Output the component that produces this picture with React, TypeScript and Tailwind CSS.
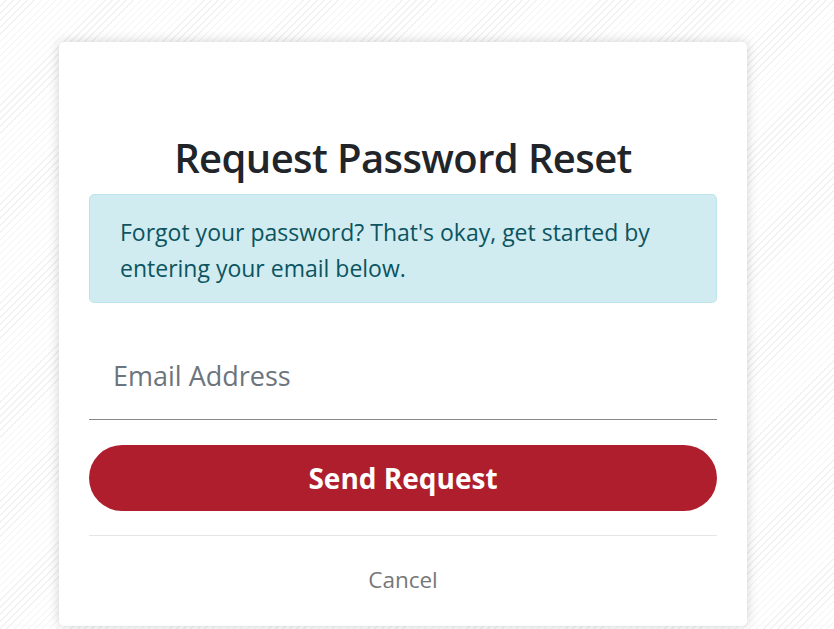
const font = { fontFamily: '"Open Sans", "Noto Sans", sans-serif' };

export default function App() {
  return (
    <div
      className="min-h-[629px] w-full bg-[repeating-linear-gradient(135deg,#ffffff_0px,#ffffff_4px,#f2f2f2_4px,#f2f2f2_5px)] pt-[42px] pl-[59px]"
      style={font}
    >
      <div className="w-[688px] h-[584px] rounded-[5px] bg-white shadow-[0_0_12px_rgba(0,0,0,0.18)] px-[30px] pt-[92px]">
        <h1 className="text-center text-[40px] leading-[48px] font-semibold text-[#212529] tracking-[-0.6px]">
          Request Password Reset
        </h1>
        <div className="mt-[12px] h-[109px] rounded-[5px] border border-[#bee5eb] bg-[#d1ecf1] px-[30px] pt-[19px] text-[23px] leading-[36px] text-[#0c5460]">
          Forgot your password? That's okay, get started by entering your email below.
        </div>
        <div className="mt-[38px]">
          <input
            type="email"
            placeholder="Email Address"
            className="w-full h-[79px] border-b border-[#888888] px-[24px] pb-[10px] text-[27px] text-[#495057] placeholder:text-[#6c757d] outline-none"
          />
        </div>
        <button className="mt-[25px] w-full h-[66px] rounded-full bg-[#ae1e2d] text-white text-[28px] font-bold">
          Send Request
        </button>
        <div className="mt-[24px] border-t border-[#e6e6e6] pt-[27px] text-center">
          <a href="#" className="text-[22.5px] text-[#777777]">
            Cancel
          </a>
        </div>
      </div>
    </div>
  );
}
